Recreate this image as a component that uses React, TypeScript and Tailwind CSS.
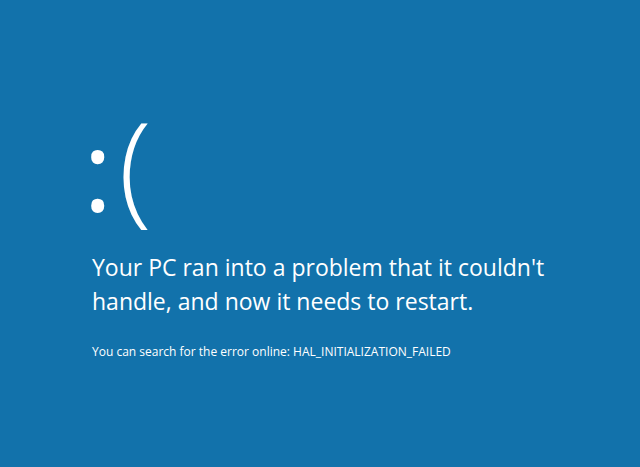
export default function App() {
  return (
    <div className="min-h-screen w-full bg-[#1272ab] text-white font-['Open_Sans','Noto_Sans',sans-serif] overflow-hidden">
      <div className="pl-[92px] pt-[103px]">
        {/* sad face */}
        <div className="ml-[-9px] flex items-baseline select-none">
          <span className="text-[112px] font-medium leading-none">:</span>
          <span className="ml-[6px] text-[122px] font-light leading-none">(</span>
        </div>
        <p className="mt-[25px] text-[23px] leading-[34px] max-w-[470px]">
          Your PC ran into a problem that it couldn't handle, and now it needs to restart.
        </p>
        <p className="mt-[26px] text-[12px] leading-[16px]">
          You can search for the error online: HAL_INITIALIZATION_FAILED
        </p>
      </div>
    </div>
  );
}
